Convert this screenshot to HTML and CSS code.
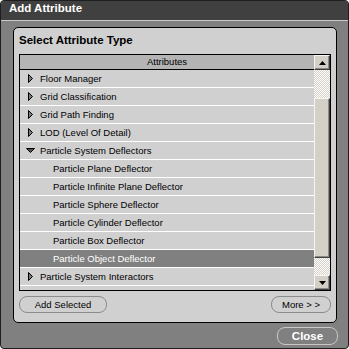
FILE: index.html
```html
<!DOCTYPE html>
<html lang="en">
<head>
  <meta charset="UTF-8">
  <title>Add Attribute</title>
  <link rel="stylesheet" href="styles.css">
</head>
<body>
  <div class="window">
    <div class="titlebar">Add Attribute</div>

    <div class="window-body">
      <div class="panel">
        <div class="panel-title">Select Attribute Type</div>

        <div class="list">
          <div class="list-main">
            <div class="list-header">Attributes</div>
            <div class="rows">
              <div class="row group">
                <span class="twisty"><svg width="5" height="9" viewBox="0 0 5 9"><polygon points="0.5,0.5 4.5,4.5 0.5,8.5" fill="#7a7a7a" stroke="#000"/></svg></span>
                Floor Manager
              </div>
              <div class="row group">
                <span class="twisty"><svg width="5" height="9" viewBox="0 0 5 9"><polygon points="0.5,0.5 4.5,4.5 0.5,8.5" fill="#7a7a7a" stroke="#000"/></svg></span>
                Grid Classification
              </div>
              <div class="row group">
                <span class="twisty"><svg width="5" height="9" viewBox="0 0 5 9"><polygon points="0.5,0.5 4.5,4.5 0.5,8.5" fill="#7a7a7a" stroke="#000"/></svg></span>
                Grid Path Finding
              </div>
              <div class="row group">
                <span class="twisty"><svg width="5" height="9" viewBox="0 0 5 9"><polygon points="0.5,0.5 4.5,4.5 0.5,8.5" fill="#7a7a7a" stroke="#000"/></svg></span>
                LOD (Level Of Detail)
              </div>
              <div class="row group">
                <span class="twisty"><svg width="9" height="5" viewBox="0 0 9 5"><polygon points="0.5,0.5 8.5,0.5 4.5,4.5" fill="#505050" stroke="#000"/></svg></span>
                Particle System Deflectors
              </div>
              <div class="row child">Particle Plane Deflector</div>
              <div class="row child">Particle Infinite Plane Deflector</div>
              <div class="row child">Particle Sphere Deflector</div>
              <div class="row child">Particle Cylinder Deflector</div>
              <div class="row child">Particle Box Deflector</div>
              <div class="row child selected">Particle Object Deflector</div>
              <div class="row group">
                <span class="twisty"><svg width="5" height="9" viewBox="0 0 5 9"><polygon points="0.5,0.5 4.5,4.5 0.5,8.5" fill="#7a7a7a" stroke="#000"/></svg></span>
                Particle System Interactors
              </div>
            </div>
          </div>

          <div class="scrollbar">
            <div class="sb-btn">
              <svg width="7" height="4" viewBox="0 0 7 4"><polygon points="3.5,0 7,4 0,4" fill="#000"/></svg>
            </div>
            <div class="sb-track">
              <div class="sb-gap top"></div>
              <div class="sb-thumb"></div>
              <div class="sb-gap"></div>
            </div>
            <div class="sb-btn">
              <svg width="7" height="4" viewBox="0 0 7 4"><polygon points="0,0 7,0 3.5,4" fill="#000"/></svg>
            </div>
          </div>
        </div>

        <div class="panel-buttons">
          <button class="pill add">Add Selected</button>
          <button class="pill more">More &gt; &gt;</button>
        </div>
      </div>

      <div class="footer">
        <button class="close">Close</button>
      </div>
    </div>
  </div>
</body>
</html>
```

FILE: styles.css
```css
html, body {
  margin: 0;
  padding: 0;
  background: #ffffff;
}

body {
  font-family: "Liberation Sans", Arial, sans-serif;
  font-size: 9.5px;
  color: #000;
}

.window {
  width: 349px;
  height: 349px;
  box-sizing: border-box;
  border: 1px solid #1e1e1e;
  border-radius: 4px;
  background: #808080;
  overflow: hidden;
  display: flex;
  flex-direction: column;
}

.titlebar {
  background: #404040;
  color: #fff;
  font-weight: bold;
  font-size: 11.5px;
  line-height: 14px;
  height: 14px;
  padding: 1px 0 5px 8px;
  margin-top: -1px;
  border-bottom: 1px solid #c8c8c8;
}

.window-body {
  flex: 1;
  padding: 6px 11px 0 12px;
  display: flex;
  flex-direction: column;
}

.panel {
  height: 296px;
  box-sizing: border-box;
  border: 1px solid #000;
  border-radius: 5px;
  background: #d0d0d0;
  padding: 5px 5px 0 5px;
  display: flex;
  flex-direction: column;
}

.panel-title {
  font-weight: bold;
  font-size: 11.5px;
  line-height: 14px;
  margin-bottom: 7px;
}

/* list box with header and scrollbar */
.list {
  height: 237px;
  box-sizing: border-box;
  border: 1px solid #000;
  display: flex;
}

.list-main {
  flex: 1;
  overflow: hidden;
  display: flex;
  flex-direction: column;
}

.list-header {
  height: 14px;
  line-height: 14px;
  background: #b4b4b4;
  border-bottom: 1px solid #000;
  text-align: center;
  flex-shrink: 0;
}

.rows {
  flex: 1;
  overflow: hidden;
}

.row {
  height: 17px;
  border-bottom: 1px solid #fff;
  background: #d0d0d0;
  display: flex;
  align-items: center;
  white-space: nowrap;
}

.row.group {
  padding-left: 5px;
}

.row.child {
  padding-left: 33px;
}

.row.selected {
  background: #808080;
  color: #fff;
}

.twisty {
  width: 10px;
  margin-right: 5px;
  display: flex;
  justify-content: center;
  align-items: center;
}

.twisty svg {
  display: block;
}

.scrollbar {
  width: 16px;
  display: flex;
  flex-direction: column;
}

.sb-btn,
.sb-thumb {
  box-sizing: border-box;
  background: #d4d0c8;
  border: 1px solid;
  border-color: #f4f4f0 #404040 #404040 #f4f4f0;
  box-shadow: inset -1px -1px #8a8a86;
}

.sb-btn {
  height: 15px;
  display: flex;
  align-items: center;
  justify-content: center;
  flex-shrink: 0;
}

.sb-track {
  flex: 1;
  display: flex;
  flex-direction: column;
}

.sb-gap {
  flex: 1;
  background: repeating-conic-gradient(#d4d0c8 0 25%, #fff 0 50%) 0 0 / 2px 2px;
}

.sb-gap.top {
  flex: 0 0 28px;
}

.sb-thumb {
  height: 160px;
}

.panel-buttons {
  display: flex;
  justify-content: space-between;
  margin-top: 5px;
}

.pill {
  font-family: inherit;
  font-size: 9.5px;
  height: 17px;
  padding: 0;
  border: 1px solid #8c8c8c;
  border-radius: 8px;
  background: transparent;
  color: #000;
}

.pill.add {
  width: 88px;
}

.pill.more {
  width: 60px;
}

.footer {
  display: flex;
  justify-content: flex-end;
  margin-top: 4px;
  margin-right: -1px;
}

.close {
  font-family: inherit;
  font-weight: bold;
  font-size: 11.5px;
  width: 61px;
  height: 18px;
  padding: 0;
  border: 1px solid #c8c8c8;
  border-radius: 8px;
  background: #808080;
  color: #fff;
}
```
